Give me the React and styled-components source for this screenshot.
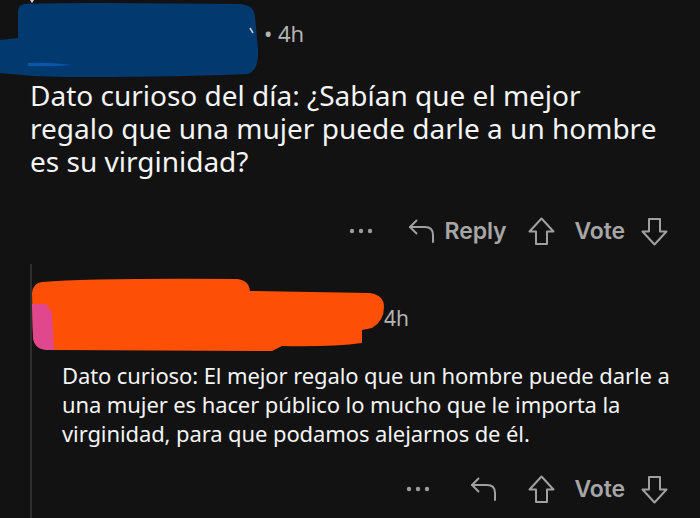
import React from "react";
import styled, { createGlobalStyle } from "styled-components";

const GlobalStyle = createGlobalStyle`
  html, body { margin: 0; padding: 0; background: #121212; }
  body { font-family: "Noto Sans", sans-serif; color: #f2f2f2; }
  #root { width: 700px; height: 518px; overflow: hidden; background: #121212; }
`;

const Page = styled.div`
  display: flex;
  flex-direction: column;
  width: 700px;
  height: 518px;
`;

const Header = styled.div`
  display: flex;
  align-items: flex-start;
  height: ${(p) => p.$h}px;
`;

const Meta = styled.span`
  font-family: "Noto Sans", sans-serif;
  font-size: ${(p) => p.$size}px;
  color: #b4b4b4;
  margin-top: ${(p) => p.$top}px;
  margin-left: ${(p) => p.$left}px;
  line-height: 1;
  white-space: pre;
`;

const Body = styled.p`
  margin: ${(p) => p.$mt}px 0 0 ${(p) => p.$ml}px;
  font-family: "Noto Sans", sans-serif;
  font-size: ${(p) => p.$size}px;
  line-height: ${(p) => p.$lh}px;
  letter-spacing: ${(p) => p.$ls}px;
  color: #f4f4f4;
  white-space: nowrap;
`;

const ActionBar = styled.div`
  display: flex;
  align-items: center;
  justify-content: flex-end;
  height: 40px;
  margin-top: ${(p) => p.$mt}px;
  padding-right: 32px;
`;

const Action = styled.div`
  display: flex;
  align-items: center;
  gap: 10px;
  margin-left: ${(p) => p.$ml}px;
  color: #a6a6a6;
  font-family: Inter, Roboto, sans-serif;
  font-weight: 600;
  font-size: 23px;
  letter-spacing: -0.1px;
`;

const Thread = styled.div`
  margin-top: 13px;
  margin-left: 30px;
  border-left: 2px solid #2e2e2e;
  padding-top: 13px;
  flex: 1;
  display: flex;
  flex-direction: column;
`;

const Dots = () => (
  <svg width="24" height="6" viewBox="0 0 24 6">
    <circle cx="3" cy="3" r="2.2" fill="#9c9c9c" />
    <circle cx="12" cy="3" r="2.2" fill="#9c9c9c" />
    <circle cx="21" cy="3" r="2.2" fill="#9c9c9c" />
  </svg>
);

const ReplyIcon = () => (
  <svg width="27" height="26" viewBox="0 0 27 26" fill="none" stroke="#a0a0a0" strokeWidth="2" strokeLinecap="round" strokeLinejoin="round">
    <path d="M8.5 2.5 L2 9 L8.5 15.5" />
    <path d="M2 9 H17 Q25 9 25 17 V24" />
  </svg>
);

const UpArrow = () => (
  <svg width="27" height="29" viewBox="0 0 27 29" fill="none" stroke="#a0a0a0" strokeWidth="2" strokeLinejoin="round">
    <path d="M13.5 1.5 L1.5 14.5 H8 V27 H19 V14.5 H25.5 Z" />
  </svg>
);

const DownArrow = () => (
  <svg width="27" height="29" viewBox="0 0 27 29" fill="none" stroke="#a0a0a0" strokeWidth="2" strokeLinejoin="round">
    <path d="M13.5 27.5 L1.5 14.5 H8 V2 H19 V14.5 H25.5 Z" />
  </svg>
);

const BlueBlob = () => (
  <svg width="262" height="78" viewBox="0 0 262 78">
    <path d="M30 0 L34 0 L32 3 Z" fill="#dcdcdc" />
    <path
      d="M24 4 Q60 2 240 4 Q254 5 255 16 L258 50 Q259 70 248 74 Q180 77 90 77 Q40 77 22 75 L0 73 L0 40 L18 38 L18 12 Q18 5 24 4 Z"
      fill="#02396f"
    />
    <path d="M28 63 Q50 62 72 65 Q50 67 28 66 Z" fill="#0a56ab" />
    <path d="M250 28 L253 33" stroke="#cfcfcf" strokeWidth="1.5" />
  </svg>
);

const OrangeBlob = () => (
  <svg width="356" height="76" viewBox="0 0 356 76">
    <path
      d="M10 5 Q60 1 205 2 Q217 3 218 14 L338 16 Q352 18 352 30 Q352 44 340 51 L330 53 L330 66 Q300 70 250 69 L240 74 L20 73 Q2 73 1 60 L0 16 Q1 6 10 5 Z"
      fill="#fe4f06"
    />
    <path d="M0 27 L14 27 L20 36 L22 73 L14 73 Q2 72 1 60 Z" fill="#e0478d" />
  </svg>
);

export default function App() {
  return (
    <>
      <GlobalStyle />
      <Page>
        <Header $h={78}>
          <BlueBlob />
          <Meta $size={22} $top={22} $left={2}>• 4h</Meta>
        </Header>
        <Body $mt={1} $ml={30} $size={28} $lh={33} $ls={0}>
          Dato curioso del día: ¿Sabían que el mejor
          <br />
          regalo que una mujer puede darle a un hombre
          <br />
          es su virginidad?
        </Body>
        <ActionBar $mt={33}>
          <Action $ml={0}><Dots /></Action>
          <Action $ml={35}><ReplyIcon /><span>Reply</span></Action>
          <Action $ml={22}><UpArrow /></Action>
          <Action $ml={19}><span>Vote</span></Action>
          <Action $ml={16}><DownArrow /></Action>
        </ActionBar>
        <Thread>
          <Header $h={76}>
            <OrangeBlob />
            <Meta $size={21} $top={31} $left={-4}>4h</Meta>
          </Header>
          <Body $mt={8} $ml={30} $size={22} $lh={29} $ls={-0.1}>
            Dato curioso: El mejor regalo que un hombre puede darle a
            <br />
            una mujer es hacer público lo mucho que le importa la
            <br />
            virginidad, para que podamos alejarnos de él.
          </Body>
          <ActionBar $mt={21}>
            <Action $ml={0}><Dots /></Action>
            <Action $ml={40}><ReplyIcon /></Action>
            <Action $ml={31}><UpArrow /></Action>
            <Action $ml={19}><span>Vote</span></Action>
            <Action $ml={16}><DownArrow /></Action>
          </ActionBar>
        </Thread>
      </Page>
    </>
  );
}
